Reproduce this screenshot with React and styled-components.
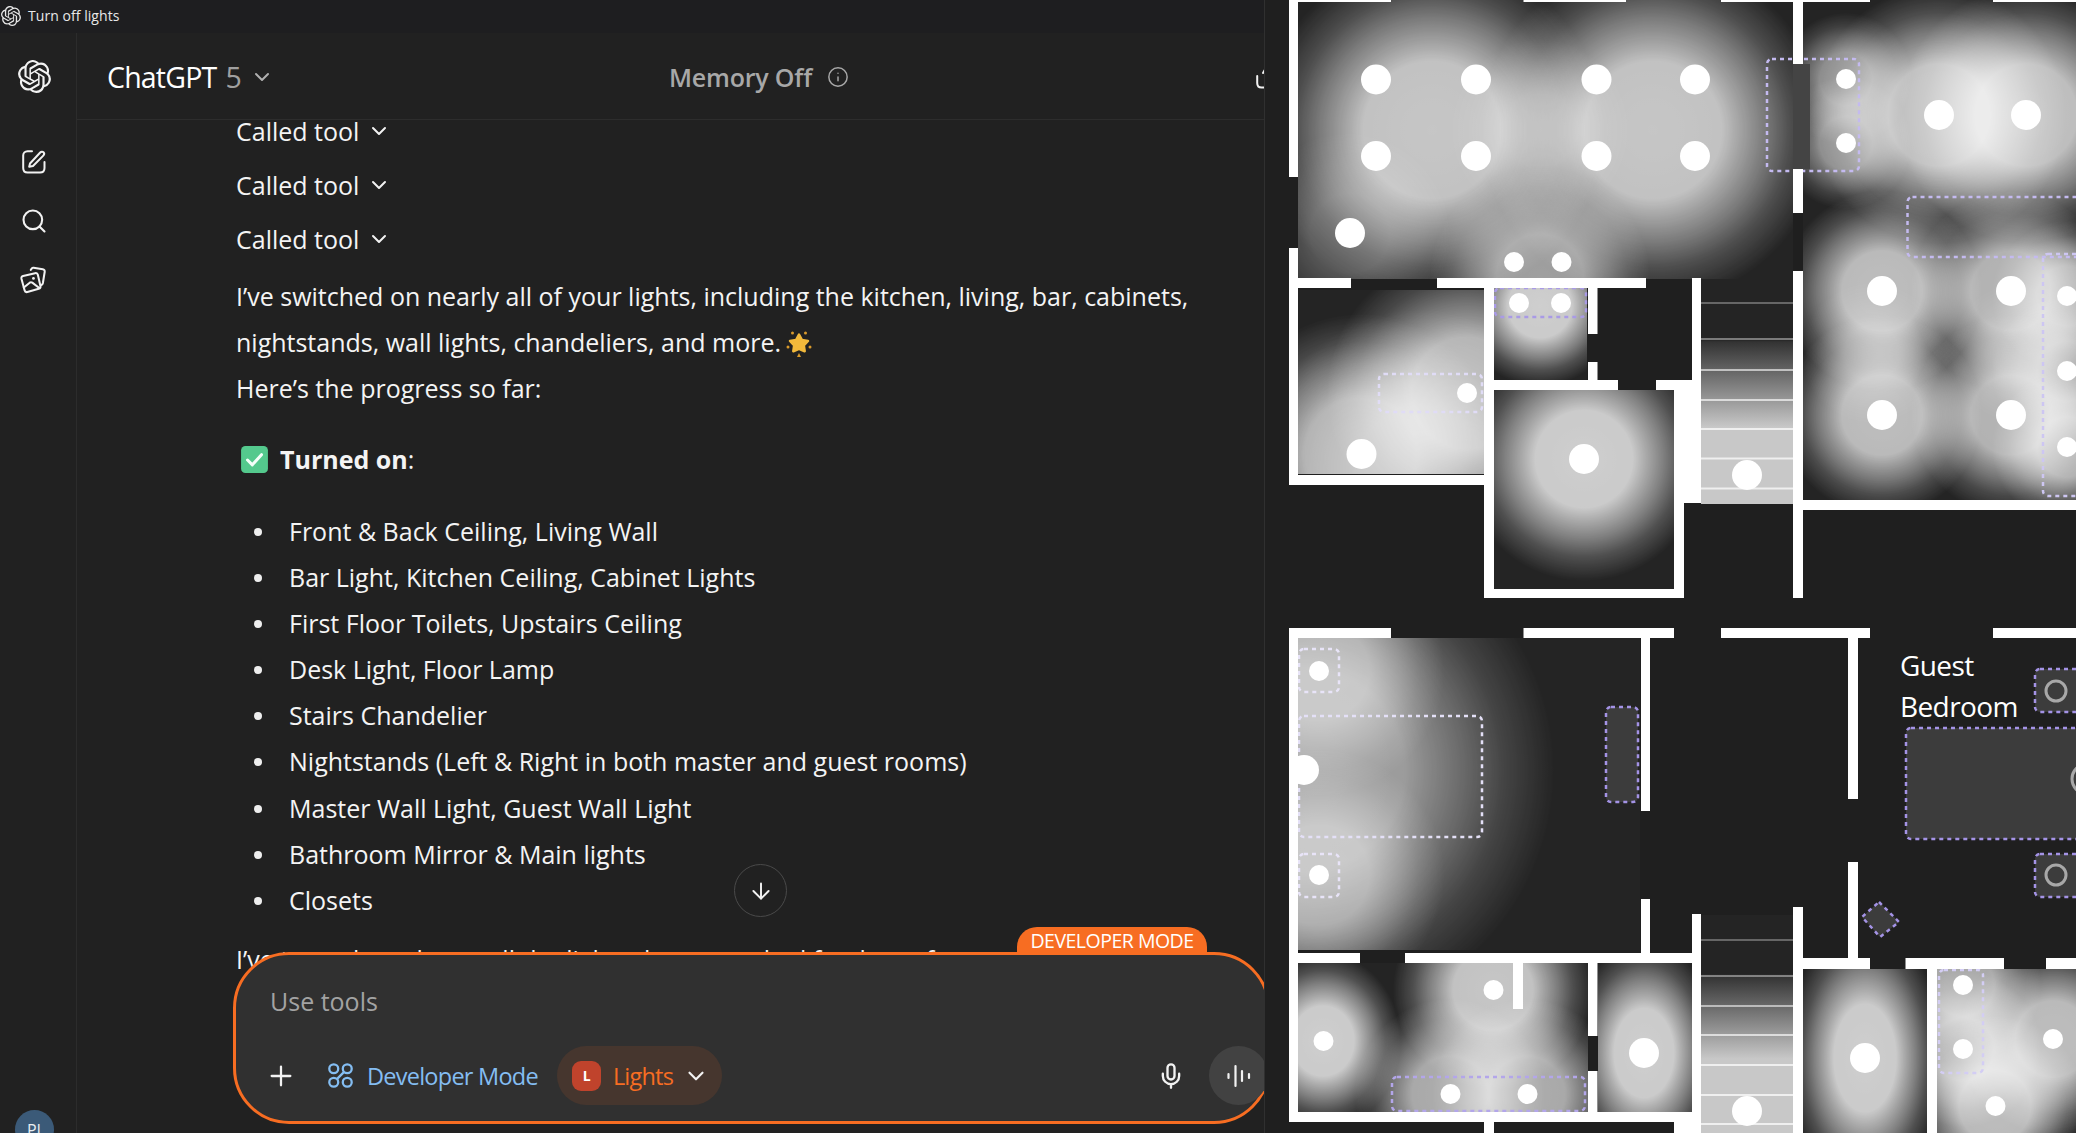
import React from 'react'
import styled, { createGlobalStyle } from 'styled-components'
import { ChevronDown, Info, ArrowDown, Plus, Search, Mic } from 'lucide-react'
import { SiOpenai } from 'react-icons/si'

const GlobalStyle = createGlobalStyle`
  html, body { margin: 0; padding: 0; background: #1f1f1f; }
  * { box-sizing: border-box; }
`

const Page = styled.div`
  width: 2076px;
  height: 1133px;
  display: flex;
  overflow: hidden;
  font-family: "Open Sans", "Liberation Sans", sans-serif;
  color: #fff;
`
const ChatWindow = styled.div`
  width: 1265px;
  height: 100%;
  flex: none;
  display: flex;
  flex-direction: column;
  background: #212121;
  border-right: 1px solid #303030;
  overflow: hidden;
`
const TitleBar = styled.div`
  height: 33px;
  flex: none;
  display: flex;
  align-items: center;
  gap: 7px;
  padding: 0 0 2px 1px;
  background: #1e1e20;
  font-size: 14px;
  letter-spacing: 0.05px;
  color: #e8e8e8;
`
const Body = styled.div`
  flex: 1;
  min-height: 0;
  display: flex;
`
const Sidebar = styled.nav`
  width: 77px;
  flex: none;
  display: flex;
  flex-direction: column;
  align-items: center;
  padding: 27px 8px 0 0;
  border-right: 1px solid #2c2c2c;
  position: relative;
`
const NavIcon = styled.div`
  display: flex;
  height: ${p => p.$h || 26}px;
  margin-top: ${p => p.$top || 0}px;
`
const Avatar = styled.div`
  margin-top: auto;
  margin-bottom: -16px;
  width: 39px;
  height: 39px;
  flex: none;
  border-radius: 50%;
  background: #3b5a78;
  color: #e8edf2;
  font-size: 16px;
  display: flex;
  justify-content: center;
  padding-top: 9px;
  line-height: 22px;
`
const Main = styled.main`
  flex: 1;
  min-width: 0;
  display: flex;
  flex-direction: column;
`
const Header = styled.header`
  height: 87px;
  flex: none;
  display: flex;
  align-items: center;
  padding: 2px 0 0 30px;
  border-bottom: 1px solid #2d2d2d;
  margin-right: -1px;
`
const Model = styled.div`
  width: 562px;
  display: flex;
  align-items: center;
  font-size: 28.500px;
  letter-spacing: -0.8px;
`
const ModelNumber = styled.span`
  color: #a0a0a0;
  margin-left: 9px;
  margin-right: 9px;
`
const Memory = styled.div`
  display: flex;
  align-items: center;
  gap: 15px;
  font-size: 25px;
  font-weight: 600;
  letter-spacing: -0.2px;
  color: #a8a8a8;
`
const EdgeIcon = styled.div`
  margin-left: auto;
  margin-right: -16px;
  display: flex;
`
const Thread = styled.section`
  flex: 1;
  min-height: 0;
  position: relative;
  overflow: hidden;
`
const Messages = styled.div`
  margin-top: -12px;
  padding-left: 159px;
  font-size: 25px;
  line-height: 46px;
  color: #f4f4f4;
`
const ToolRow = styled.div`
  display: flex;
  align-items: center;
  gap: 8px;
  height: 46px;
  margin-bottom: 8px;
`
const Paragraph = styled.p`
  margin: ${p => p.$top || 0}px 0 0;
  white-space: nowrap;
  svg { vertical-align: -6px; margin-left: 5px; }
`
const Heading = styled.p`
  margin: 25.500px 0 0;
  display: flex;
  align-items: center;
  gap: 11px;
  padding-left: 4px;
  b { font-weight: 700; }
`
const List = styled.ul`
  list-style: none;
  margin: 26px 0 0;
  padding: 0;
`
const Item = styled.li`
  height: 46.100px;
  padding-left: 53px;
  position: relative;
  &::before {
    content: '';
    position: absolute;
    left: 18px;
    top: 20px;
    width: 8px;
    height: 8px;
    border-radius: 50%;
    background: #eee;
  }
`
const ScrollButton = styled.div`
  position: absolute;
  left: 657px;
  top: 744px;
  width: 53px;
  height: 53px;
  border-radius: 50%;
  border: 1px solid #4a4a4a;
  background: #212121;
  display: flex;
  align-items: center;
  justify-content: center;
`
const Composer = styled.div`
  position: absolute;
  left: 156px;
  top: 832px;
  width: 1037px;
  height: 172px;
  border: 3px solid #f76d22;
  border-radius: 56px;
  background: #303030;
  display: flex;
  flex-direction: column;
`
const Badge = styled.div`
  position: absolute;
  right: 60px;
  top: -28px;
  width: 190px;
  height: 28px;
  border-radius: 20px 20px 0 0;
  background: #f76d22;
  color: #fff;
  font-size: 19.500px;
  line-height: 28px;
  letter-spacing: -0.5px;
  text-align: center;
`
const Placeholder = styled.div`
  padding: 28px 0 0 34px;
  height: 83px;
  font-size: 25px;
  line-height: 36px;
  color: #a3a3a3;
`
const ToolBar = styled.div`
  display: flex;
  align-items: center;
  padding: 8px 0 0 29px;
`
const DevMode = styled.div`
  display: flex;
  align-items: center;
  gap: 13px;
  margin-left: 30px;
  font-size: 23.500px;
  letter-spacing: -0.75px;
  color: #84bdf2;
`
const Pill = styled.div`
  display: flex;
  align-items: center;
  width: 165px;
  height: 59px;
  margin-left: 19px;
  padding-left: 15px;
  border-radius: 30px;
  background: #46362e;
  color: #f76d22;
  font-size: 23.500px;
  letter-spacing: -0.8px;
`
const AppBadge = styled.span`
  width: 29px;
  height: 30px;
  margin-right: 12px;
  border-radius: 9px;
  background: #c0432c;
  color: #fff;
  font-size: 14px;
  font-weight: 700;
  display: flex;
  align-items: center;
  justify-content: center;
`
const PillChevron = styled.span`
  display: flex;
  margin-left: 10px;
`
const MicBox = styled.div`
  margin-left: auto;
  margin-right: 24px;
  display: flex;
`
const VoiceButton = styled.div`
  width: 59px;
  height: 59px;
  margin-right: -1px;
  border-radius: 50%;
  background: #424242;
  display: flex;
  align-items: center;
  justify-content: center;
`
const PlanPanel = styled.aside`
  flex: 1;
  min-width: 0;
  background: #1f1f1f;
  display: flex;
`
const Glow = styled.ellipse`
  mix-blend-mode: screen;
`
const RoomGroup = styled.g`
  isolation: isolate;
`
const PlanLabel = styled.text`
  font-family: "Open Sans", "Liberation Sans", sans-serif;
  font-size: 28px;
  letter-spacing: -0.6px;
  fill: #fff;
`

const composeIcon = (
  <svg width="26" height="26" viewBox="0 0 26 26" fill="none" stroke="#f2f2f2" strokeWidth="2" strokeLinecap="round" strokeLinejoin="round">
    <path d="M11 2.200H6.500C4 2.200 2.200 4 2.200 6.500V19c0 2.700 1.800 4.500 4.300 4.500H19c2.700 0 4.500-1.800 4.500-4.500v-6" />
    <path d="M9 14.500 19.200 3.500c1-1 2.500-1 3.300-.2.800.8.800 2.300-.2 3.300L12 17l-3.800.8z" />
  </svg>
)
const edgeIcon = (
  <svg width="26" height="26" viewBox="0 0 26 26" fill="none" stroke="#f2f2f2" strokeWidth="2" strokeLinecap="round" strokeLinejoin="round">
    <path d="M2.200 12v7c0 2.700 1.800 4.500 4.300 4.500H12" />
    <path d="M8 9 12 2" />
  </svg>
)
const libraryIcon = (
  <svg width="30" height="30" viewBox="0 0 28 28" fill="none" stroke="#f2f2f2" strokeWidth="1.900" strokeLinecap="round" strokeLinejoin="round">
    <path d="M11 4.500 12 3.200c.4-.5 1-.7 1.600-.6l8.600 1.300c1.300.2 2 1.200 1.800 2.400l-1.700 10.500c-.2 1-.6 1.600-1.500 2" />
    <path d="M3.800 10.200 15 7.600c1.300-.3 2.300.4 2.600 1.600l2.400 10.400c.3 1.300-.4 2.300-1.600 2.600L7.800 25.200c-1.300.3-2.300-.4-2.600-1.600L2.300 12.800c-.3-1.300.2-2.300 1.500-2.600z" />
    <path d="M4.500 21 10 16.500c.8-.6 1.600-.6 2.400 0l6.500 5" />
    <circle cx="13.500" cy="12.500" r="1.300" fill="#f2f2f2" stroke="none" />
  </svg>
)
const devIcon = (
  <svg width="27" height="27" viewBox="0 0 26 26" fill="none" stroke="#84bdf2" strokeWidth="2.200">
    <circle cx="6.500" cy="6.500" r="4.300" />
    <circle cx="19.500" cy="6.500" r="4.300" />
    <circle cx="6.500" cy="19.500" r="4.300" />
    <circle cx="19.500" cy="19.500" r="4.300" />
    <path d="M16.500 9.500 9.500 16.500" />
  </svg>
)
const voiceIcon = (
  <svg width="24" height="24" viewBox="0 0 24 24" stroke="#f2f2f2" strokeWidth="2.200" strokeLinecap="round">
    <path d="M8.500 2v20M1.500 10v4M15 7v10M22 10v4" />
  </svg>
)
const sunEmoji = (
  <svg width="26" height="28" viewBox="0 0 26 28">
    <path d="M13 4.500l3 5.500 6 1-4.200 4.300.9 6L13 18.800 7.300 21.300l.9-6L4 11l6-1z" fill="#f2b93b" stroke="#f2b93b" strokeWidth="2.500" strokeLinejoin="round" />
    <g fill="#d99a2b">
      <circle cx="6.500" cy="3" r="1.500" /><circle cx="19.500" cy="3" r="1.500" />
      <circle cx="2" cy="17" r="1.500" /><circle cx="24" cy="17" r="1.500" />
      <path d="M13 23l2 4h-4z" />
    </g>
  </svg>
)
const checkEmoji = (
  <svg width="29" height="29" viewBox="0 0 27 27" fill="none">
    <rect x="1" y="1" width="25" height="25" rx="4" fill="#54c98d" />
    <path d="M7 14l4.500 4.500L20 9" stroke="#f4fff9" strokeWidth="2.800" strokeLinecap="round" strokeLinejoin="round" />
  </svg>
)

const lists = [
  'Front & Back Ceiling, Living Wall',
  'Bar Light, Kitchen Ceiling, Cabinet Lights',
  'First Floor Toilets, Upstairs Ceiling',
  'Desk Light, Floor Lamp',
  'Stairs Chandelier',
  'Nightstands (Left & Right in both master and guest rooms)',
  'Master Wall Light, Guest Wall Light',
  'Bathroom Mirror & Main lights',
  'Closets',
]

// rooms: clip rect [x, y, w, h] and the glows [cx, cy, r, opacity, ry]
const rooms = [
  { box: [1298, 0, 495, 279], glows: [[1432, 130, 172, .95], [1653, 130, 172, .95], [1540, 130, 90, .28], [1540, 278, 110, .72], [1350, 233, 100, .3]] },
  { box: [1803, 0, 273, 500], glows: [[1846, 79, 66, .62], [1846, 143, 66, .62], [1939, 115, 128, .92], [2026, 115, 128, .92], [1882, 291, 100, .9], [2011, 291, 100, .85], [1882, 415, 100, .9], [2011, 415, 100, .85], [1872, 353, 70, .3], [2021, 353, 70, .3], [2067, 296, 75, .7], [2067, 371, 75, .7], [2067, 447, 75, .8]] },
  { box: [1298, 290, 186, 184], glows: [[1361, 454, 140, .8], [1467, 393, 140, .85], [1420, 470, 160, .45]] },
  { box: [1494, 288, 93, 92], glows: [[1540, 306, 80, 1]] },
  { box: [1494, 390, 180, 199], glows: [[1584, 459, 122, 1]] },
  { box: [1298, 638, 342, 312], glows: [[1304, 770, 250, .72], [1319, 671, 125, .6], [1319, 875, 125, .6]] },
  { box: [1298, 963, 290, 149], glows: [[1323, 1041, 78, 1, 88], [1493, 990, 100, .95], [1450, 1094, 95, .8], [1527, 1094, 95, .8]] },
  { box: [1598, 963, 94, 149], glows: [[1644, 1053, 75, 1, 112]] },
  { box: [1803, 969, 124, 164], glows: [[1865, 1058, 78, 1, 135]] },
  { box: [1937, 969, 139, 164], glows: [[1963, 985, 78, .8], [1963, 1049, 78, .8], [2053, 1039, 95, .9], [1995, 1106, 90, .9]] },
]

const bigDots = [[1376, 79.5], [1476, 79.5], [1596.5, 79.5], [1695, 79.5], [1376, 156], [1476, 156], [1596.5, 156], [1695, 156], [1350, 233], [1939, 115], [2026, 115], [1882, 291], [2011, 291], [1882, 415], [2011, 415], [1747, 475], [1361.5, 454], [1584, 459], [1304, 770], [1644, 1053], [1747, 1111], [1865, 1058]]
const smallDots = [[1514, 262], [1561.5, 262], [1846, 79], [1846, 143], [2067, 296], [2067, 371], [2067, 447], [1467, 393], [1519, 303], [1561, 303], [1319, 671], [1319, 875], [1323.5, 1041], [1493.5, 990], [1450.5, 1094], [1527.5, 1094], [1963, 985], [1963, 1049], [2053, 1039], [1995.5, 1106]]

// [x1, y1, x2, y2]
const walls = [
  [1289, 0, 1298, 177], [1289, 248, 1298, 288], [1289, 0, 1391, 2], [1523.5, 0, 1626, 2], [1721, 0, 1870, 2], [1993, 0, 2076, 2],
  [1289, 278, 1351, 288], [1437, 278, 1646, 288], [1793, 0, 1803, 64], [1793, 169, 1803, 213], [1793, 271, 1803, 598],
  [1289, 278, 1298, 485], [1289, 475, 1494, 485], [1484, 288, 1494, 598], [1484, 589, 1684, 598], [1674, 390, 1684, 598],
  [1674, 390, 1701, 503], [1494, 380, 1618, 390], [1656, 380, 1692, 390], [1588, 288, 1597.5, 334], [1588, 362, 1597.5, 390],
  [1692, 278, 1701, 390], [1803, 500, 2076, 510],
  [1289, 628, 1391, 638], [1523.5, 628, 1674, 638], [1721, 628, 1870, 638], [1993, 628, 2076, 638], [1289, 628, 1298, 963],
  [1641, 638, 1650, 811], [1641, 899, 1650, 963], [1848, 638, 1858, 799], [1848, 862, 1858, 958],
  [1289, 953, 1360, 963], [1405, 953, 1692, 963], [1803, 958, 1870, 969], [1905.5, 958, 2004, 969], [2046, 958, 2076, 969],
  [1692, 914, 1701, 1112], [1793, 907, 1803, 1133], [1927, 969, 1937, 1133], [1289, 1112, 1674, 1122], [1674, 1112, 1701, 1133],
  [1484, 1122, 1494, 1133], [1588, 963, 1597.5, 1036], [1588, 1071, 1597.5, 1112], [1513, 963, 1523, 1009], [1289, 953, 1298, 1122],
]

// [x, y, w, h, stroke, fill]
const zones = [
  [1767, 59, 92, 112, '#c4baf0'], [1907.5, 197, 200, 60, '#c4baf0'], [2043, 254, 60, 242, '#cdc6f2'], [1379, 374, 103, 38, '#e0dcf6'],
  [1495, 288, 91, 29, '#a99ae6'], [1299, 649, 40, 43, '#e8e4f8'], [1299, 716, 183, 121, '#e4e0f7'], [1299, 854, 40, 43, '#e8e4f8'],
  [1606, 707, 32, 95, '#a493e6', '#3c3c3c'], [2035, 669, 60, 43, '#a493e6', '#3c3c3c'], [1906, 728, 200, 111, '#a493e6', '#3c3c3c'],
  [2035, 854, 60, 43, '#a493e6', '#3c3c3c'], [1392, 1077, 193, 34, '#b3a6ea'], [1939, 970, 44, 103, '#d3cdf4'],
]
const rings = [[2056, 691, 10], [2056, 875, 10], [2087, 779, 15]]
const stairLines = [[303, .3], [339, .4], [370, .6], [400, .65], [429, .7], [458.5, .7], [488.5, .7], [940, .3], [976, .4], [1006, .55], [1035, .65], [1065, .7], [1095, .7], [1124, .7]]

const FloorPlan = () => (
  <svg width="811" height="1133" viewBox="1265 0 811 1133">
    <defs>
      <radialGradient id="glow">
        <stop offset="0" stopColor="#fff" stopOpacity=".78" />
        <stop offset=".4" stopColor="#fff" stopOpacity=".76" />
        <stop offset=".5" stopColor="#fff" stopOpacity=".62" />
        <stop offset=".65" stopColor="#fff" stopOpacity=".42" />
        <stop offset=".8" stopColor="#fff" stopOpacity=".2" />
        <stop offset="1" stopColor="#fff" stopOpacity="0" />
      </radialGradient>
      <linearGradient id="stairs" x1="0" y1="0" x2="0" y2="1">
        <stop offset="0" stopColor="#242424" />
        <stop offset=".27" stopColor="#242424" />
        <stop offset=".28" stopColor="#333" />
        <stop offset=".66" stopColor="#c8c8c8" />
        <stop offset="1" stopColor="#c8c8c8" />
      </linearGradient>
      {rooms.map((room, i) => (
        <clipPath id={`room${i}`} key={i}>
          <rect x={room.box[0]} y={room.box[1]} width={room.box[2]} height={room.box[3]} />
        </clipPath>
      ))}
    </defs>

    {rooms.map((room, i) => (
      <RoomGroup key={i} clipPath={`url(#room${i})`}>
        <rect x={room.box[0]} y={room.box[1]} width={room.box[2]} height={room.box[3]} fill="#242424" />
        {room.glows.map(([cx, cy, r, o, ry], j) => (
          <Glow key={j} cx={cx} cy={cy} rx={r} ry={ry || r} opacity={o} fill="url(#glow)" />
        ))}
      </RoomGroup>
    ))}

    <rect x="1701" y="279" width="92" height="225" fill="url(#stairs)" />
    <rect x="1701" y="915" width="92" height="218" fill="url(#stairs)" />
    {stairLines.map(([y, o]) => (
      <rect key={y} x="1701" y={y - 1} width="92" height="2" fill="#fff" opacity={o} />
    ))}
    <rect x="1793" y="64" width="17" height="105" fill="#444" />

    {zones.map(([x, y, w, h, stroke, fill], i) => (
      <rect key={i} x={x} y={y} width={w} height={h} rx="5" fill={fill || 'none'} stroke={stroke} strokeWidth="2.500" strokeDasharray="4 4" />
    ))}
    <path d="M1879 902 1899 922 1880 937 1862 917z" fill="#3c3c3c" stroke="#a493e6" strokeWidth="2.500" strokeDasharray="4 4" strokeLinejoin="round" />

    {walls.map(([x1, y1, x2, y2], i) => (
      <rect key={i} x={x1} y={y1} width={x2 - x1} height={y2 - y1} fill="#fff" />
    ))}

    {bigDots.map(([cx, cy], i) => <circle key={i} cx={cx} cy={cy} r="15" fill="#fff" />)}
    {smallDots.map(([cx, cy], i) => <circle key={i} cx={cx} cy={cy} r="10" fill="#fff" />)}
    {rings.map(([cx, cy, r], i) => <circle key={i} cx={cx} cy={cy} r={r} fill="none" stroke="#a8a8a8" strokeWidth="3" />)}

    <PlanLabel x="1900" y="676">Guest</PlanLabel>
    <PlanLabel x="1900" y="717">Bedroom</PlanLabel>
  </svg>
)

const App = () => {
  return (
    <Page>
      <GlobalStyle />
      <ChatWindow>
        <TitleBar>
          <SiOpenai size={20} color="#e8e8e8" />
          Turn off lights
        </TitleBar>
        <Body>
          <Sidebar>
            <NavIcon $h={34}><SiOpenai size={33} color="#f2f2f2" /></NavIcon>
            <NavIcon $top={55}>{composeIcon}</NavIcon>
            <NavIcon $top={32}><Search size={28} color="#f2f2f2" strokeWidth={1.8} /></NavIcon>
            <NavIcon $top={32} $h={30}>{libraryIcon}</NavIcon>
            <Avatar>PI</Avatar>
          </Sidebar>
          <Main>
            <Header>
              <Model>
                ChatGPT<ModelNumber>5</ModelNumber>
                <ChevronDown size={24} color="#b0b0b0" strokeWidth={2} />
              </Model>
              <Memory>
                Memory Off
                <Info size={22} color="#a8a8a8" strokeWidth={1.6} />
              </Memory>
              <EdgeIcon>{edgeIcon}</EdgeIcon>
            </Header>
            <Thread>
              <Messages>
                {[0, 1, 2].map(i => (
                  <ToolRow key={i}>
                    Called tool
                    <ChevronDown size={24} color="#f2f2f2" strokeWidth={2} />
                  </ToolRow>
                ))}
                <Paragraph $top={10.5}>I’ve switched on nearly all of your lights, including the kitchen, living, bar, cabinets,</Paragraph>
                <Paragraph>nightstands, wall lights, chandeliers, and more.{sunEmoji}</Paragraph>
                <Paragraph>Here’s the progress so far:</Paragraph>
                <Heading>{checkEmoji}<span><b>Turned on</b>:</span></Heading>
                <List>
                  {lists.map(item => <Item key={item}>{item}</Item>)}
                </List>
                <Paragraph $top={13}>I’ve turned on almost all the lights that you asked for, but a few</Paragraph>
              </Messages>
              <ScrollButton>
                <ArrowDown size={26} color="#f2f2f2" strokeWidth={1.8} />
              </ScrollButton>
              <Composer>
                <Badge>DEVELOPER MODE</Badge>
                <Placeholder>Use tools</Placeholder>
                <ToolBar>
                  <Plus size={32} color="#f2f2f2" strokeWidth={1.7} />
                  <DevMode>{devIcon}Developer Mode</DevMode>
                  <Pill>
                    <AppBadge>L</AppBadge>
                    Lights
                    <PillChevron><ChevronDown size={26} color="#f2f2f2" strokeWidth={2} /></PillChevron>
                  </Pill>
                  <MicBox><Mic size={28} color="#f2f2f2" strokeWidth={2} /></MicBox>
                  <VoiceButton>{voiceIcon}</VoiceButton>
                </ToolBar>
              </Composer>
            </Thread>
          </Main>
        </Body>
      </ChatWindow>
      <PlanPanel>
        <FloorPlan />
      </PlanPanel>
    </Page>
  )
}

export default App
